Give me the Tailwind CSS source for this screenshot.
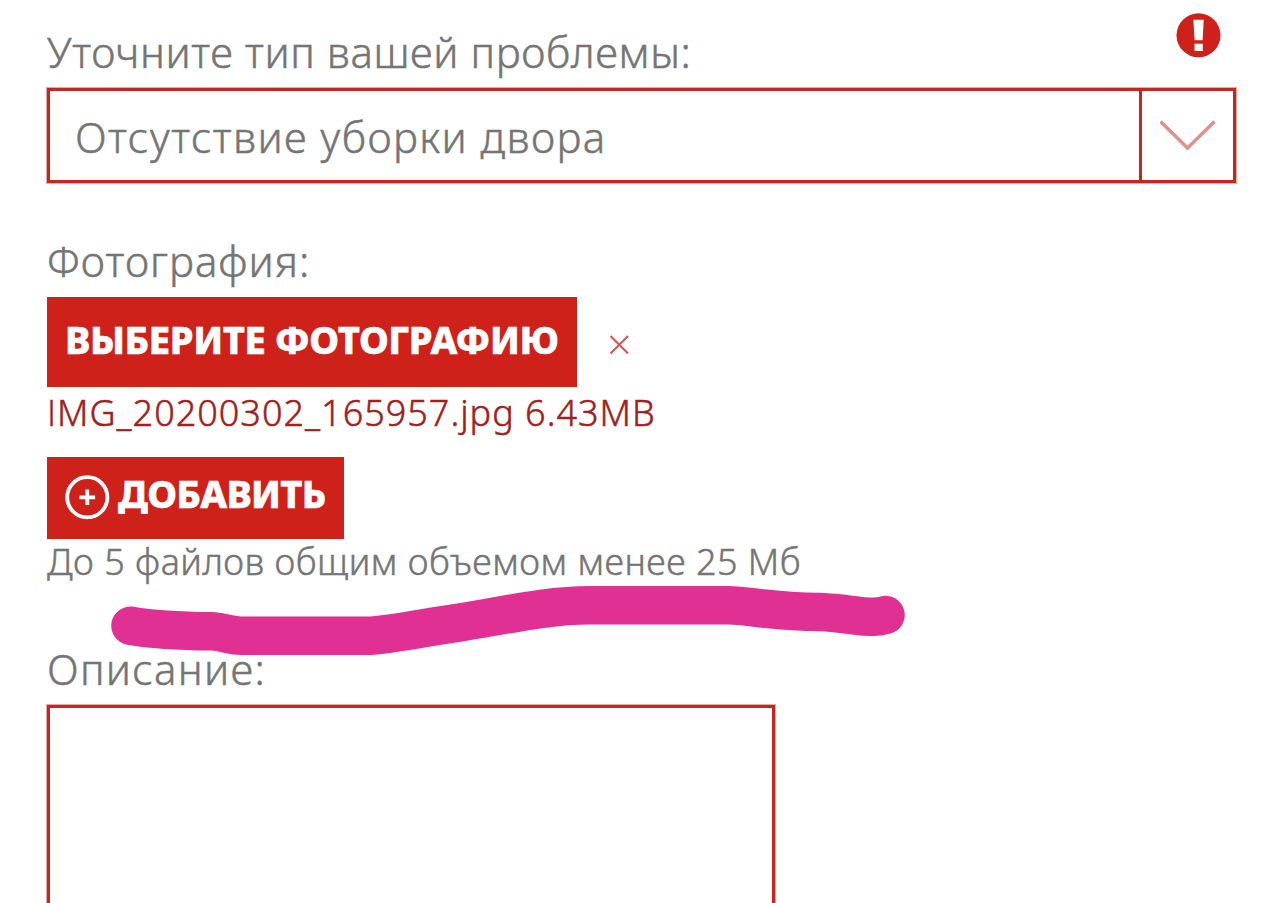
<!DOCTYPE html>
<html lang="ru">
<head>
    <meta charset="utf-8">
    <meta name="viewport" content="width=device-width, initial-scale=1.0">
    <title>Сообщить о проблеме</title>
    <script src="https://cdn.jsdelivr.net/npm/@tailwindcss/browser@4"></script>
</head>
<body class="relative h-screen overflow-hidden bg-white font-['Noto_Sans',sans-serif] font-light text-[#757575] [-webkit-text-stroke:0.5px]">
    <form class="flex h-screen flex-col items-start whitespace-nowrap pl-[47px] pr-[44px] pt-[13px]">
        <div class="flex w-full items-start justify-between pr-[15px]">
            <label class="mt-[9px] text-[42px] leading-[60px] tracking-[0.6px]">Уточните тип вашей проблемы:</label>
            <svg class="size-[45px]" viewBox="0 0 45 45">
                <circle cx="22.5" cy="22.3" r="22" fill="#cd211a"/>
                <path d="M17.300 6.700h10.400l-1.100 20.500h-7.900z" fill="#fff"/>
                <path d="M18.500 30.700h8.300v7.300h-8.300z" fill="#fff"/>
            </svg>
        </div>
        <div class="mt-[6px] flex h-[95px] w-full border-3 border-[#c3271f] shadow-[0_0_0_1px_#c3271f66]">
            <span class="flex-1 pl-[25px] text-[42px] leading-[91px] tracking-[1.4px]">Отсутствие уборки двора</span>
            <span class="flex w-[94px] items-center justify-center border-l-3 border-[#c3271f]">
                <svg class="h-8 w-[56px]" viewBox="0 0 56 32" fill="none" stroke="#df918d" stroke-width="3.5">
                    <path d="M0.500 1.500l27 26.500L54.500 1.500"/>
                </svg>
            </span>
        </div>

        <label class="mt-[48px] text-[42px] leading-[60px] tracking-[1px]">Фотография:</label>
        <div class="mt-[6px] flex items-center">
            <button type="button" class="h-[90px] w-[530px] bg-[#cd211a] pb-[5px] pl-[18px] text-left text-[38px] font-extrabold leading-[85px] tracking-[-0.4px] text-white">ВЫБЕРИТЕ ФОТОГРАФИЮ</button>
            <svg class="ml-[33px] mt-[6px] size-5" viewBox="0 0 20 20" stroke="#cf5b57" stroke-width="2.2">
                <path d="M0.500 1l17.500 17.500M18 1L0.500 18.500"/>
            </svg>
        </div>
        <span class="mt-px text-[36px] leading-[50px] tracking-[1px] text-[#a02020]"><span class="font-['Open_Sans',sans-serif]">I</span>MG_20200302_165957.jpg 6.43MB</span>
        <button type="button" class="mt-[19px] flex h-[82px] w-[297px] bg-[#cd211a] pl-[18px] text-[38px] font-extrabold leading-[72px] tracking-[-0.7px] text-white">
            <svg class="mt-[18px] size-[45px]" viewBox="0 0 45 45" fill="none" stroke="#fff" stroke-width="3.8">
                <circle cx="22.300" cy="22.300" r="20.100"/>
                <path d="M22.300 14.500v15.600M14.500 22.300h15.600"/>
            </svg>
            <span class="ml-2">ДОБАВИТЬ</span>
        </button>
        <span class="mt-px text-[36px] leading-[44px] tracking-[0.5px]">До 5 файлов общим объемом менее 25 Мб</span>

        <label class="mt-[55px] text-[42px] leading-[60px] tracking-[1.3px]">Описание:</label>
        <textarea class="mt-[6px] min-h-0 w-[728px] flex-1 resize-none border-3 border-b-0 border-[#c3271f] shadow-[0_0_0_1px_#c3271f66]"></textarea>
    </form>

    <!-- маркер поверх формы -->
    <svg class="pointer-events-none absolute left-0 top-[570px]" width="1280" height="100" viewBox="0 570 1280 100" fill="none" stroke="#e13093" stroke-width="38.500" stroke-linecap="round" stroke-linejoin="round">
        <path d="M130.500 625.700C155 630 180 631 212 631.300C225 632 230 635.700 241 635.700H366C385 635.700 415 629 450 624C500 616.500 545 605.300 590 605.300H728C750 605.300 770 612 820 612C845 613 857 616.800 874 616.800Q880 616.500 885.500 615"/>
    </svg>
</body>
</html>
